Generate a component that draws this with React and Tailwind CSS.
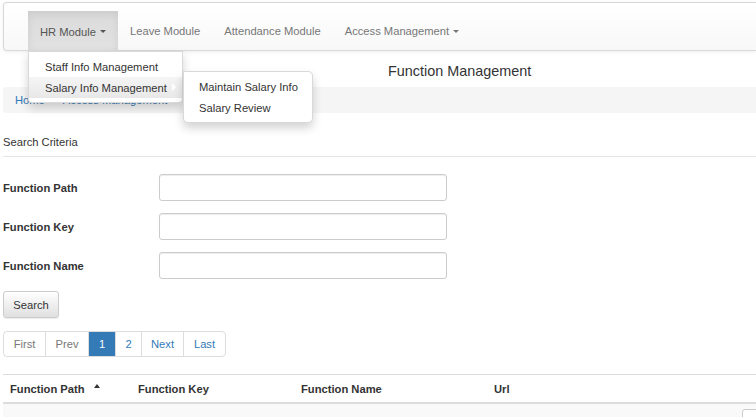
import React from 'react';

const Caret = () => (
  <span className="inline-block w-0 h-0 ml-[4px] border-x-[3.5px] border-x-transparent border-t-[3.5px] border-t-current align-middle" />
);

const Sep = () => (
  <span className="inline-block w-0 h-0 mx-[7px] border-y-[3px] border-y-transparent border-l-[4px] border-l-[#555]" />
);

const navItems = [
  { label: 'Leave Module' },
  { label: 'Attendance Module' },
  { label: 'Access Management', caret: true },
];

const fields = ['Function Path', 'Function Key', 'Function Name'];

const pages = [
  { label: 'First', w: 'w-[43px]', tone: 'text-[#777]' },
  { label: 'Prev', w: 'w-[44px]', tone: 'text-[#777]' },
  { label: '1', w: 'w-[28px]', tone: 'text-white bg-[#337ab7] border-[#337ab7] z-10' },
  { label: '2', w: 'w-[27px]', tone: 'text-[#337ab7]' },
  { label: 'Next', w: 'w-[43px]', tone: 'text-[#337ab7]' },
  { label: 'Last', w: 'w-[43px]', tone: 'text-[#337ab7]' },
];

const App = () => {
  return (
    <div className="w-[756px] h-[417px] overflow-hidden bg-white text-[#333] text-[11.2px] leading-[16px] font-['Liberation_Sans',Arial,sans-serif] pt-[2px]">
      {/* navbar */}
      <nav className="relative z-20 ml-[3px] h-[49px] border border-r-0 border-[#d8d8d8] rounded-l-[4px] bg-linear-to-b from-white to-[#f8f8f8] shadow-[0_1px_4px_rgba(0,0,0,0.075)] flex items-end pl-[24px] text-[#777]">
        <div className="relative h-[40px] px-[12px] pt-[1px] flex items-center text-[#555] bg-linear-to-b from-[#dbdbdb] to-[#e2e2e2] shadow-[inset_0_3px_9px_rgba(0,0,0,0.075)] translate-y-[1px]">
          HR Module <Caret />
          <div className="absolute left-0 top-[40px] w-[155px] py-[4px] bg-white border border-black/15 rounded-b-[4px] shadow-[0_5px_10px_rgba(0,0,0,0.175)] text-[#333]">
            <div className="h-[21px] px-[16px] flex items-center whitespace-nowrap">Staff Info Management</div>
            <div className="relative h-[21px] px-[16px] flex items-center whitespace-nowrap bg-linear-to-b from-[#f5f5f5] to-[#e8e8e8]">
              Salary Info Management
              <span className="absolute right-[6px] top-[6px] w-0 h-0 border-y-[4px] border-y-transparent border-l-[4px] border-l-white" />
              <div className="absolute left-full ml-[1px] top-[-6px] w-[130px] py-[4px] bg-white border border-black/15 rounded-[5px] rounded-tl-none shadow-[0_5px_10px_rgba(0,0,0,0.175)]">
                <div className="h-[21px] px-[15px] flex items-center">Maintain Salary Info</div>
                <div className="h-[21px] px-[15px] flex items-center">Salary Review</div>
              </div>
            </div>
          </div>
        </div>
        {navItems.map((item) => (
          <div key={item.label} className="h-[40px] px-[12px] pt-[2px] flex items-center whitespace-nowrap">
            {item.label}
            {item.caret && <Caret />}
          </div>
        ))}
      </nav>

      {/* page title */}
      <div className="h-[36px] pt-[3px] flex items-center pl-[388px] text-[14.4px]">Function Management</div>

      {/* breadcrumb */}
      <div className="ml-[3px] h-[26px] bg-[#f5f5f5] rounded-l-[4px] flex items-center pl-[12px]">
        <span className="text-[#337ab7]">Home</span>
        <Sep />
        <span className="text-[#337ab7]">Access Management</span>
        <Sep />
      </div>

      {/* search criteria */}
      <div className="ml-[3px] h-[44px] pt-[21px] border-b border-[#e5e5e5]">Search Criteria</div>

      <div className="ml-[3px] mt-[17px] flex flex-col gap-[12px]">
        {fields.map((f) => (
          <div key={f} className="flex items-center">
            <label className="w-[156px] font-bold">{f}</label>
            <input
              type="text"
              className="w-[288px] h-[27px] border border-[#ccc] rounded-[3px] bg-white px-[10px] shadow-[inset_0_1px_1px_rgba(0,0,0,0.075)] outline-none"
            />
          </div>
        ))}
      </div>

      <button className="ml-[3px] mt-[12px] w-[56px] h-[27px] border border-[#ccc] rounded-[3px] bg-linear-to-b from-white to-[#e0e0e0] shadow-[0_1px_1px_rgba(0,0,0,0.075)] text-[#333] flex items-center justify-center">
        Search
      </button>

      {/* pagination */}
      <div className="ml-[3px] mt-[13px] flex">
        {pages.map((p, i) => (
          <div
            key={p.label}
            className={`relative h-[26px] border border-[#ddd] flex items-center justify-center ${p.w} ${p.tone} ${i === 0 ? 'rounded-l-[4px]' : '-ml-px'} ${i === pages.length - 1 ? 'rounded-r-[4px]' : ''}`}
          >
            {p.label}
          </div>
        ))}
      </div>

      {/* table */}
      <div className="ml-[3px] mt-[17px] border-t border-[#ddd]">
        <div className="h-[29px] grid grid-cols-[128px_163px_193px_1fr] items-center font-bold border-b-2 border-[#ddd]">
          <div className="pl-[7px] flex items-center">
            Function Path
            <span className="ml-[9px] -mt-[5px] w-0 h-0 border-x-[3.5px] border-x-transparent border-b-[4px] border-b-[#333]" />
          </div>
          <div className="pl-[7px]">Function Key</div>
          <div className="pl-[7px]">Function Name</div>
          <div className="pl-[7px]">Url</div>
        </div>
        <div className="h-[40px] bg-[#f9f9f9] pt-[5px] overflow-hidden">
          <div className="ml-[739px] w-[30px] h-[22px] border border-[#ccc] rounded-[3px] bg-white" />
        </div>
      </div>
    </div>
  );
};

export default App;
